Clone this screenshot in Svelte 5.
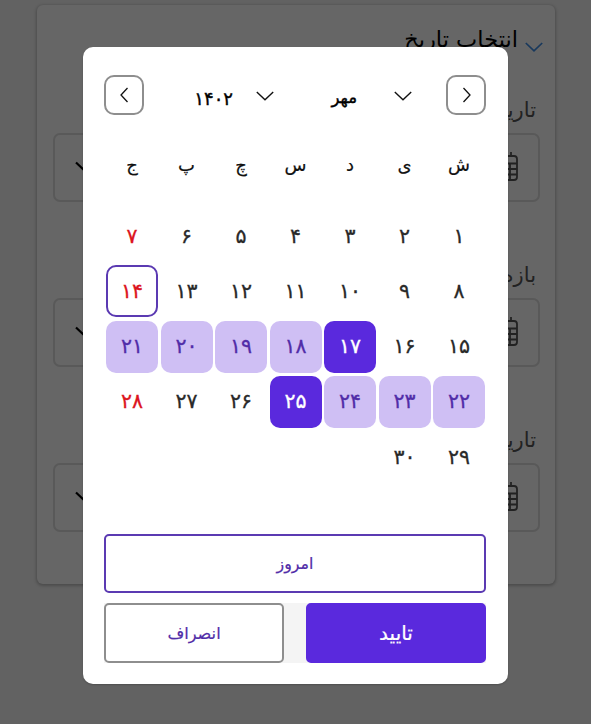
<script>
  const weekdays = ['ش', 'ی', 'د', 'س', 'چ', 'پ', 'ج'];
  const fields = ['تاریخ', 'بازه', 'تاریخ'];
  const days = Array.from({ length: 30 }, (_, i) => i + 1);
  const rangeStart = 17;
  const rangeEnd = 25;
  const today = 14;

  const fa = (n) => String(n).replace(/\d/g, (d) => '۰۱۲۳۴۵۶۷۸۹'[d]);
</script>

{#snippet chevron()}
  <svg class="chevron" width="18" height="10" viewBox="0 0 18 10"><path d="M.8 1 9 8.8 17.2 1" /></svg>
{/snippet}

<div class="page" dir="rtl">
  <section class="card">
    <h1>{@render chevron()}<span>انتخاب تاریخ</span></h1>
    {#each fields as label}
      <div class="field">
        <span class="label">{label}</span>
        <div class="input">
          <svg class="calendar" width="27" height="30" viewBox="0 0 27 30">
            <path d="M4 5H23Q26 5 26 8V26Q26 29 23 29H4Q1 29 1 26V8Q1 5 4 5ZM1 12.5H26M1 18H26M1 23.5H26M7 12.5V29M13 12.5V29M19 12.5V29M7 1V5M20 1V5" />
          </svg>
          <svg class="arrow" width="20" height="12" viewBox="0 0 20 12"><path d="M1 1.5 10 10 19 1.5" /></svg>
        </div>
      </div>
    {/each}
  </section>

  <div class="overlay">
    <div class="dialog" role="dialog">
      <header>
        <button class="nav" aria-label="ماه قبل">
          <svg width="10" height="16" viewBox="0 0 10 16"><path d="M2.5 1 9 8 2.5 15" /></svg>
        </button>
        <div class="select month">{@render chevron()}<span>مهر</span></div>
        <div class="select year">{@render chevron()}<span>{fa(1402)}</span></div>
        <button class="nav" aria-label="ماه بعد">
          <svg width="10" height="16" viewBox="0 0 10 16"><path d="M8.5 1 2 8 8.5 15" /></svg>
        </button>
      </header>

      <div class="weekdays">
        {#each weekdays as day}<span>{day}</span>{/each}
      </div>

      <div class="days">
        {#each days as day}
          <div
            class="day"
            class:holiday={day % 7 === 0}
            class:today={day === today}
            class:range={day > rangeStart && day < rangeEnd}
            class:edge={day === rangeStart || day === rangeEnd}
          ><span>{fa(day)}</span></div>
        {/each}
      </div>

      <footer>
        <button class="btn outline"><span>امروز</span></button>
        <div class="actions">
          <button class="btn primary"><span>تایید</span></button>
          <button class="btn cancel"><span>انصراف</span></button>
        </div>
      </footer>
    </div>
  </div>
</div>

<style>
  :global(body) { margin: 0; }
  * { box-sizing: border-box; }
  .page {
    position: relative;
    width: 591px;
    height: 724px;
    overflow: hidden;
    padding: 5px 36px 0 37px;
    background: #f4f4f4;
    font-family: 'DejaVu Sans', sans-serif;
  }
  svg { display: block; fill: none; flex: none; }
  .card {
    height: 579px;
    padding: 18px 15px 0 16px;
    border-radius: 6px;
    background: #fff;
    box-shadow: 0 1px 3px 1px rgba(0, 0, 0, .22);
  }
  h1 {
    display: flex;
    align-items: center;
    gap: 7px;
    height: 32px;
    margin: 0 0 41px;
    font-size: 22.5px;
    font-weight: 400;
    color: #000;
    white-space: nowrap;
  }
  h1 .chevron { margin: 16px -3px 0 0; }
  .chevron path { stroke: #111; stroke-width: 1.4; }
  h1 .chevron path { stroke: #3c8ce6; stroke-width: 1.7; }
  .field { height: 165px; color: #555; }
  .label { display: block; height: 37px; padding-right: 4px; font-size: 21px; line-height: 29px; }
  .input {
    display: flex;
    align-items: center;
    justify-content: space-between;
    height: 69px;
    padding: 0 20px 2px 20px;
    border: 2px solid #dedede;
    border-radius: 7px;
  }
  .calendar { margin-bottom: 2px; }
  .calendar path { stroke: #555; stroke-width: 1.8; }
  .arrow path { stroke: #000; stroke-width: 2.2; }
  .overlay {
    position: absolute;
    inset: 0;
    padding: 47px 83.5px 0 82.5px;
    background: rgba(0, 0, 0, .6);
  }
  .dialog {
    height: 637px;
    padding: 28px 21.5px 22px 21.5px;
    border-radius: 10px;
    background: #fff;
    box-shadow: 0 1px 2px rgba(0, 0, 0, .2);
  }
  header { display: flex; align-items: center; height: 40px; }
  button { padding: 0; background: #fff; font: inherit; }
  .nav {
    display: flex;
    align-items: center;
    justify-content: center;
    width: 40px;
    height: 40px;
    border: 2px solid #8e8e8e;
    border-radius: 10px;
  }
  .nav path { stroke: #111; stroke-width: 1.3; }
  .select { display: flex; align-items: center; height: 40px; font-size: 18px; color: #000; -webkit-text-stroke: .4px; }
  .select span { padding-top: 6px; }
  .select .chevron { margin-top: 2px; }
  .month { width: 138px; padding-right: 34px; gap: 37px; }
  .year { flex: 1; padding-right: 34px; gap: 23px; }
  .month span { padding-top: 4px; font-size: 16.5px; }
  .year span { font-size: 18px; }
  .weekdays, .days {
    display: grid;
    grid-template-columns: repeat(7, 52px);
    column-gap: 2.5px;
    padding: 0 1px;
  }
  .weekdays { height: 40px; margin: 29px 0 26px; font-size: 18px; line-height: 41px; text-align: center; color: #111; -webkit-text-stroke: .2px; }
  .days { grid-auto-rows: 52px; row-gap: 3.3px; height: 324px; }
  .day {
    display: flex;
    align-items: center;
    justify-content: center;
    padding-bottom: 1px;
    border-radius: 10px;
    font-size: 20.5px;
    color: #292929;
    -webkit-text-stroke: .3px;
  }
  .holiday { color: #dc1420; }
  .today { border: 2px solid #5b3ab2; }
  .range { background: #cfbff4; color: #512da8; }
  .edge { background: #5a29dd; color: #fff; }
  .btn { display: block; width: 100%; height: 59px; border: 2px solid #5b3ab2; border-radius: 5px; font-size: 15.8px; color: #512da8; -webkit-text-stroke: .2px; }
  .actions { display: flex; justify-content: space-between; margin-top: 10px; background: #f4f4f4; }
  .actions .btn { width: 180px; height: 60px; }
  .actions .primary { background: #5a29dd; border-color: #5a29dd; color: #fff; font-size: 20px; }
  .actions .cancel { border-color: #8e8e8e; font-size: 16.2px; }
</style>
